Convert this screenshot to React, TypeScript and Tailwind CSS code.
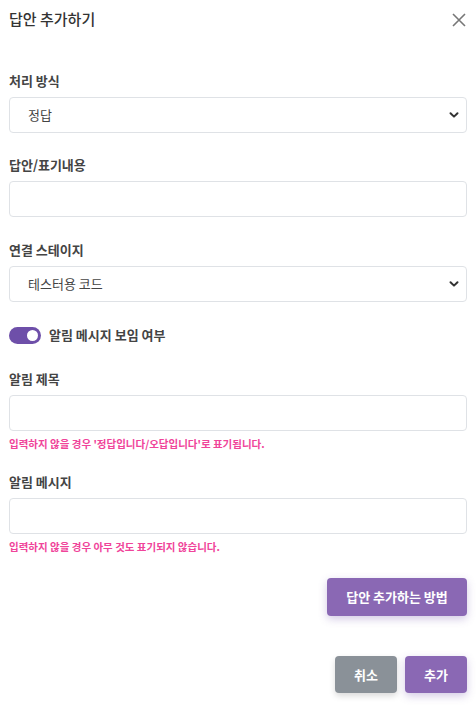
import React from "react";

const font = { fontFamily: '"Noto Sans CJK KR", "Noto Sans", sans-serif' };

function Label({ children }: { children: React.ReactNode }) {
  return (
    <div className="text-[13px] font-semibold leading-[20px] text-[#444]">
      {children}
    </div>
  );
}

function Select({ value }: { value: string }) {
  return (
    <div className="mt-[6px] flex h-[36px] items-center justify-between rounded-[4px] border border-[#dfe2e6] bg-white pl-[18px] pr-[7px]">
      <span className="text-[13px] text-[#444]">{value}</span>
      <svg width="10" height="8" viewBox="0 0 10 8" fill="none">
        <path d="M1.5 2.2 L5 5.6 L8.5 2.2" stroke="#333" strokeWidth="2" strokeLinecap="round" strokeLinejoin="round" />
      </svg>
    </div>
  );
}

function Input() {
  return <div className="mt-[6px] h-[36px] rounded-[4px] border border-[#dfe2e6] bg-white" />;
}

function Hint({ children }: { children: React.ReactNode }) {
  return <div className="mt-[5px] text-[10.5px] font-semibold leading-[16px] text-[#f0449a]">{children}</div>;
}

export default function App() {
  return (
    <div style={font} className="h-[705px] w-[476px] bg-white px-[9px]">
      <div className="flex h-[38px] items-center justify-between pt-[1px]">
        <h1 className="text-[15px] font-medium text-[#333]">답안 추가하기</h1>
        <svg width="14" height="14" viewBox="0 0 14 14" className="mr-[1px]">
          <path d="M1 1 L13 13 M13 1 L1 13" stroke="#777" strokeWidth="1.6" />
        </svg>
      </div>

      <div className="mt-[33px]">
        <Label>처리 방식</Label>
        <Select value="정답" />
      </div>

      <div className="mt-[22px]">
        <Label>답안/표기내용</Label>
        <Input />
      </div>

      <div className="mt-[23px]">
        <Label>연결 스테이지</Label>
        <Select value="테스터용 코드" />
      </div>

      <div className="mt-[23px] flex items-center gap-[8px]">
        <div className="flex h-[17px] w-[32px] items-center justify-end rounded-full bg-[#6e4fa9] pr-[3px]">
          <div className="h-[11px] w-[11px] rounded-full bg-white" />
        </div>
        <span className="text-[13px] font-semibold leading-[20px] text-[#444]">알림 메시지 보임 여부</span>
      </div>

      <div className="mt-[24px]">
        <Label>알림 제목</Label>
        <Input />
        <Hint>입력하지 않을 경우 '정답입니다/오답입니다'로 표기됩니다.</Hint>
      </div>

      <div className="mt-[20px]">
        <Label>알림 메시지</Label>
        <Input />
        <Hint>입력하지 않을 경우 아무 것도 표기되지 않습니다.</Hint>
      </div>

      <div className="mt-[23px] flex justify-end">
        <button className="h-[38px] w-[140px] rounded-[4px] bg-[#8a68b4] text-[13px] font-bold text-white shadow-[0_3px_8px_rgba(110,80,170,0.3)]">
          답안 추가하는 방법
        </button>
      </div>

      <div className="mt-[40px] flex justify-end gap-[8px]">
        <button className="h-[37px] w-[62px] rounded-[4px] bg-[#8a9198] text-[13px] font-bold text-white shadow-[0_3px_6px_rgba(0,0,0,0.15)]">
          취소
        </button>
        <button className="h-[37px] w-[62px] rounded-[4px] bg-[#8a68b4] text-[13px] font-bold text-white shadow-[0_3px_8px_rgba(110,80,170,0.3)]">
          추가
        </button>
      </div>
    </div>
  );
}
